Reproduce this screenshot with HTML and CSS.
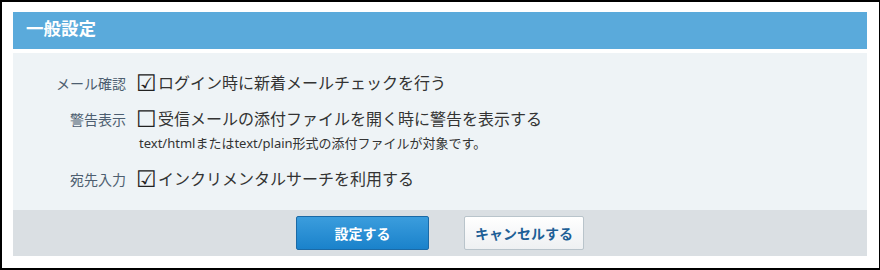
FILE: index.html
```html
<!DOCTYPE html>
<html lang="ja">
<head>
<meta charset="utf-8">
<title>一般設定</title>
<link rel="stylesheet" href="styles.css">
</head>
<body>
<div class="frame">
  <section class="panel">
    <h2 class="panel-title">一般設定</h2>
    <div class="panel-body">
      <div class="row">
        <div class="label">メール確認</div>
        <div class="value"><span class="box">☑</span>ログイン時に新着メールチェックを行う</div>
      </div>
      <div class="row row-gap">
        <div class="label">警告表示</div>
        <div class="value"><span class="box">☐</span>受信メールの添付ファイルを開く時に警告を表示する
          <div class="note">text/htmlまたはtext/plain形式の添付ファイルが対象です。</div>
        </div>
      </div>
      <div class="row row-gap2">
        <div class="label">宛先入力</div>
        <div class="value"><span class="box">☑</span>インクリメンタルサーチを利用する</div>
      </div>
    </div>
    <div class="panel-footer">
      <button class="btn btn-primary">設定する</button>
      <button class="btn btn-secondary">キャンセルする</button>
    </div>
  </section>
</div>
</body>
</html>
```

FILE: styles.css
```css
* { box-sizing: border-box; }
html, body { margin: 0; padding: 0; background: #fff; }
body {
  font-family: "Noto Sans", "Noto Sans CJK JP", sans-serif;
  color: #333;
}
.frame {
  width: 880px;
  height: 270px;
  border-style: solid;
  border-color: #000;
  border-width: 2px 1px 2px 2px;
  padding: 10px 12px 0 11px;
}
.panel { width: 854px; }
.panel-title {
  margin: 0;
  height: 37px;
  background: #5aaadb;
  color: #fff;
  font-family: "Noto Sans CJK JP", sans-serif;
  font-size: 17.5px;
  font-weight: bold;
  line-height: 32px;
  padding-left: 13px;
}
.panel-body {
  margin-top: 4px;
  background: #eef3f6;
  height: 157px;
  padding-top: 17px;
}
.row {
  display: grid;
  grid-template-columns: 113px 1fr;
  column-gap: 13px;
  align-items: baseline;
}
.row-gap { margin-top: 12px; }
.row-gap2 { margin-top: 14px; }
.label {
  text-align: right;
  font-family: "Noto Sans CJK JP", sans-serif;
  font-size: 14px;
  color: #4d5e70;
}
.value {
  font-family: "Noto Sans CJK JP", sans-serif;
  font-size: 16px;
  line-height: 24px;
  color: #333;
}
.box {
  display: inline-block;
  width: 22px;
  height: 16px;
  line-height: 16px;
  margin-left: -3px;
  vertical-align: -2px;
  font-family: "Noto Sans CJK JP", sans-serif;
  font-size: 23px;
  font-weight: 500;
  color: #222;
  white-space: nowrap;
}
.note {
  font-family: "Noto Sans", "Noto Sans CJK JP", sans-serif;
  font-size: 13px;
  line-height: 18px;
  margin-top: 4px;
  color: #333;
}
.panel-footer {
  height: 46px;
  background: #dadfe3;
  display: flex;
  justify-content: center;
  align-items: center;
  gap: 35px;
}
.btn {
  height: 34px;
  border-radius: 2px;
  font-family: "Noto Sans CJK JP", sans-serif;
  font-size: 14px;
  font-weight: bold;
  padding: 0;
  cursor: pointer;
}
.btn-primary {
  width: 133px;
  color: #fff;
  background: linear-gradient(#3b9ddd, #1a82cb);
  border: 1px solid #1b6aa6;
}
.btn-secondary {
  width: 120px;
  color: #1d5f96;
  background: linear-gradient(#ffffff, #eef0f2);
  border: 1px solid #b9c4cb;
}
```
